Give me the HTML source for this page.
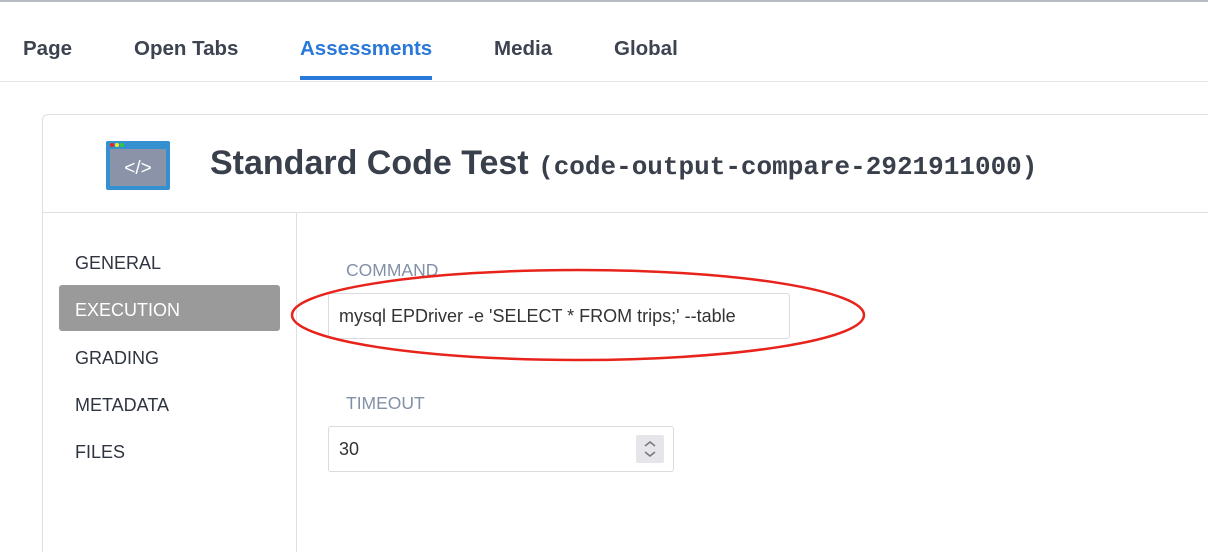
<!DOCTYPE html>
<html><head><style>
*{margin:0;padding:0;box-sizing:border-box}
html,body{width:1208px;height:552px;overflow:hidden}
body{background:#fff;font-family:"Liberation Sans",sans-serif;position:relative}
.top{position:absolute;left:0;top:0;width:1208px;height:2px;background:#b8bcc4}
.tabs{position:absolute;left:0;top:2px;width:1208px;height:80px;border-bottom:1px solid #e5e7ea}
.tab{position:absolute;top:35px;font-size:20.5px;font-weight:bold;color:#3d4350}
.tab.a{color:#2a78d8}
.ul{position:absolute;left:300px;top:76px;width:132px;height:4px;background:#2a78d8}
.card{position:absolute;left:42px;top:114px;width:1180px;height:438px;border:1px solid #dcdfe3;border-bottom:none;border-radius:6px 6px 0 0;overflow:hidden}
.hd{position:absolute;left:0;top:0;width:100%;height:98px;border-bottom:1px solid #dcdfe3}
.title{position:absolute;left:167px;top:29px;font-size:34px;font-weight:bold;color:#3a404b;white-space:nowrap}
.title span{font-family:"Liberation Mono",monospace;font-size:26px}
.side{position:absolute;left:0;top:98px;width:254px;height:340px;border-right:1px solid #dcdfe3}
.si{position:absolute;left:32px;font-size:18px;color:#2f3540}
.sel{position:absolute;left:16px;top:72px;width:221px;height:46px;background:#9a9a9a;border-radius:3px}
.lbl{position:absolute;font-size:17.5px;color:#8290a8}
.inp{position:absolute;border:1px solid #d8dbe0;border-radius:3px;font-size:18px;color:#333;padding-left:10px;display:flex;align-items:center}
</style></head><body>
<div class="top"></div>
<div class="tabs">
<div class="tab" style="left:23px">Page</div>
<div class="tab" style="left:134px">Open Tabs</div>
<div class="tab a" style="left:300px">Assessments</div>
<div class="tab" style="left:494px">Media</div>
<div class="tab" style="left:614px">Global</div>
</div>
<div class="ul"></div>
<div class="card">
<div class="hd">
<svg style="position:absolute;left:63px;top:26px" width="64" height="50" viewBox="0 0 64 50">
<rect x="0" y="0" width="64" height="49" rx="2" fill="#3590cf"/>
<rect x="4" y="8" width="56" height="37" fill="#8a93a8"/>
<circle cx="6" cy="4" r="2" fill="#e22"/><circle cx="11" cy="4" r="2" fill="#ee2"/><circle cx="16" cy="4" r="2" fill="#3c3"/>
<text x="32" y="33" text-anchor="middle" font-family="Liberation Sans" font-size="19" fill="#fff">&lt;/&gt;</text>
</svg>
<div class="title">Standard Code Test <span>(code-output-compare-2921911000)</span></div>
</div>
<div class="side">
<div class="sel"></div>
<div class="si" style="top:40px">GENERAL</div>
<div class="si" style="top:87px;color:#fff">EXECUTION</div>
<div class="si" style="top:135px">GRADING</div>
<div class="si" style="top:182px">METADATA</div>
<div class="si" style="top:229px">FILES</div>
</div>
</div>
<div class="lbl" style="left:346px;top:260px">COMMAND</div>
<div class="inp" style="left:328px;top:293px;width:462px;height:46px">mysql EPDriver -e 'SELECT * FROM trips;' --table</div>
<div class="lbl" style="left:346px;top:393px">TIMEOUT</div>
<div class="inp" style="left:328px;top:426px;width:346px;height:46px">30
<div style="position:absolute;left:307px;top:8px;width:28px;height:28px;background:#e6e6ea;border-radius:2px">
<svg width="28" height="28"><path d="M9 11l5-4 5 4M9 17l5 4 5-4" stroke="#777" stroke-width="1.5" fill="none"/></svg></div>
</div>
<svg style="position:absolute;left:0;top:0" width="1208" height="552"><ellipse cx="578" cy="315" rx="286" ry="45" fill="none" stroke="#e8231b" stroke-width="2.5"/></svg>
</body></html>
